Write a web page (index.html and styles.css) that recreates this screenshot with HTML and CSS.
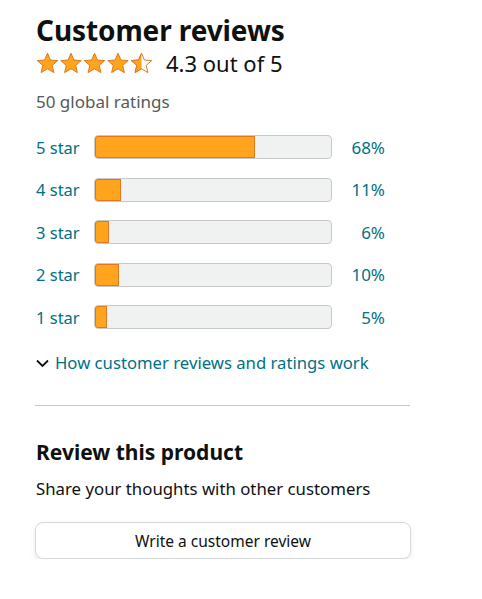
FILE: index.html
```html
<!DOCTYPE html>
<html>
<head>
<meta charset="utf-8">
<link rel="stylesheet" href="styles.css">
</head>
<body>
<div class="wrap">
  <h2 class="title">Customer reviews</h2>
  <div class="avg">
    <svg class="stars" width="118" height="24" viewBox="0 0 118 24">
      <defs>
        <path id="st" d="M11.5 1.2 L14.4 8 L21.7 8.6 L16.2 13.4 L17.9 20.6 L11.5 16.8 L5.1 20.6 L6.8 13.4 L1.3 8.6 L8.6 8 Z"/>
        <clipPath id="half"><rect x="94" y="0" width="11.5" height="24"/></clipPath>
      </defs>
      <g fill="#ffa41c" stroke="#de7921" stroke-width="1" stroke-linejoin="round">
        <use href="#st" x="0" y="1"/>
        <use href="#st" x="23.5" y="1"/>
        <use href="#st" x="47" y="1"/>
        <use href="#st" x="70.5" y="1"/>
        <use href="#st" x="94" y="1" fill="#fff"/>
      </g>
      <g fill="#ffa41c" stroke="#de7921" stroke-width="1" stroke-linejoin="round" clip-path="url(#half)">
        <use href="#st" x="94" y="1"/>
      </g>
    </svg>
    <span class="avg-text">4.3 out of 5</span>
  </div>
  <div class="total">50 global ratings</div>

  <div class="hist">
    <div class="row"><a class="lbl">5 star</a><div class="bar"><div class="fill" style="width:68%"></div></div><a class="pct">68%</a></div>
    <div class="row"><a class="lbl">4 star</a><div class="bar"><div class="fill" style="width:11%"></div></div><a class="pct">11%</a></div>
    <div class="row"><a class="lbl">3 star</a><div class="bar"><div class="fill" style="width:6%"></div></div><a class="pct">6%</a></div>
    <div class="row"><a class="lbl">2 star</a><div class="bar"><div class="fill" style="width:10%"></div></div><a class="pct">10%</a></div>
    <div class="row"><a class="lbl">1 star</a><div class="bar"><div class="fill" style="width:5%"></div></div><a class="pct">5%</a></div>
  </div>

  <div class="how">
    <svg class="chev" width="13" height="9" viewBox="0 0 13 9"><path d="M1 1.5 L6.5 7 L12 1.5" fill="none" stroke="#0f1111" stroke-width="1.8"/></svg>
    <a class="how-link">How customer reviews and ratings work</a>
  </div>

  <hr class="sep">

  <h3 class="sub">Review this product</h3>
  <p class="share">Share your thoughts with other customers</p>
  <button class="btn">Write a customer review</button>
</div>
</body>
</html>
```

FILE: styles.css
```css
html, body { margin: 0; padding: 0; background: #fff; }
body { font-family: "Noto Sans", "Liberation Sans", Arial, sans-serif; color: #0f1111; }
.wrap { padding: 12px 0 0 36px; width: 375px; }
.title { margin: 0; font-size: 28px; line-height: 36px; font-weight: 700; letter-spacing: -0.1px; }
.avg { display: flex; align-items: center; height: 30px; }
.stars { display: block; margin-right: 12px; }
.avg-text { font-size: 22px; line-height: 30px; }
.total { margin-top: 14px; font-size: 17px; line-height: 20px; color: #565959; }
.hist { margin-top: 23px; display: flex; flex-direction: column; gap: 18.5px; }
.row { display: flex; align-items: center; height: 24px; }
.lbl { width: 58px; font-size: 16.5px; color: #007185; }
.bar { width: 236px; height: 22px; border: 1px solid #c7c9c9; border-radius: 4px; background: #f0f2f2; overflow: hidden; }
.fill { height: 100%; background: #ffa41c; box-shadow: inset 0 0 0 1px #de7921; border-radius: 3px 0 0 3px; }
.pct { width: 53px; text-align: right; font-size: 17px; color: #007185; }
.how { margin-top: 21px; height: 24px; display: flex; align-items: center; gap: 6px; }
.chev { display: block; margin-top: 3px; }
.how-link { font-size: 16.7px; color: #007185; }
.sep { margin: 31px 0 0 -1px; border: 0; border-top: 1px solid #c4c6c6; width: 375px; height: 0; }
.sub { margin: 32px 0 0; font-size: 21px; line-height: 28px; font-weight: 700; }
.share { margin: 12px 0 0; font-size: 16.8px; line-height: 22px; }
.btn { display: block; margin-top: 22px; margin-left: -1px; width: 376px; height: 37px; background: #fff; border: 1px solid #d5d9d9; border-radius: 8px; box-shadow: 0 2px 5px rgba(213,217,217,.5); font-family: inherit; font-size: 15.5px; color: #0f1111; }
```
